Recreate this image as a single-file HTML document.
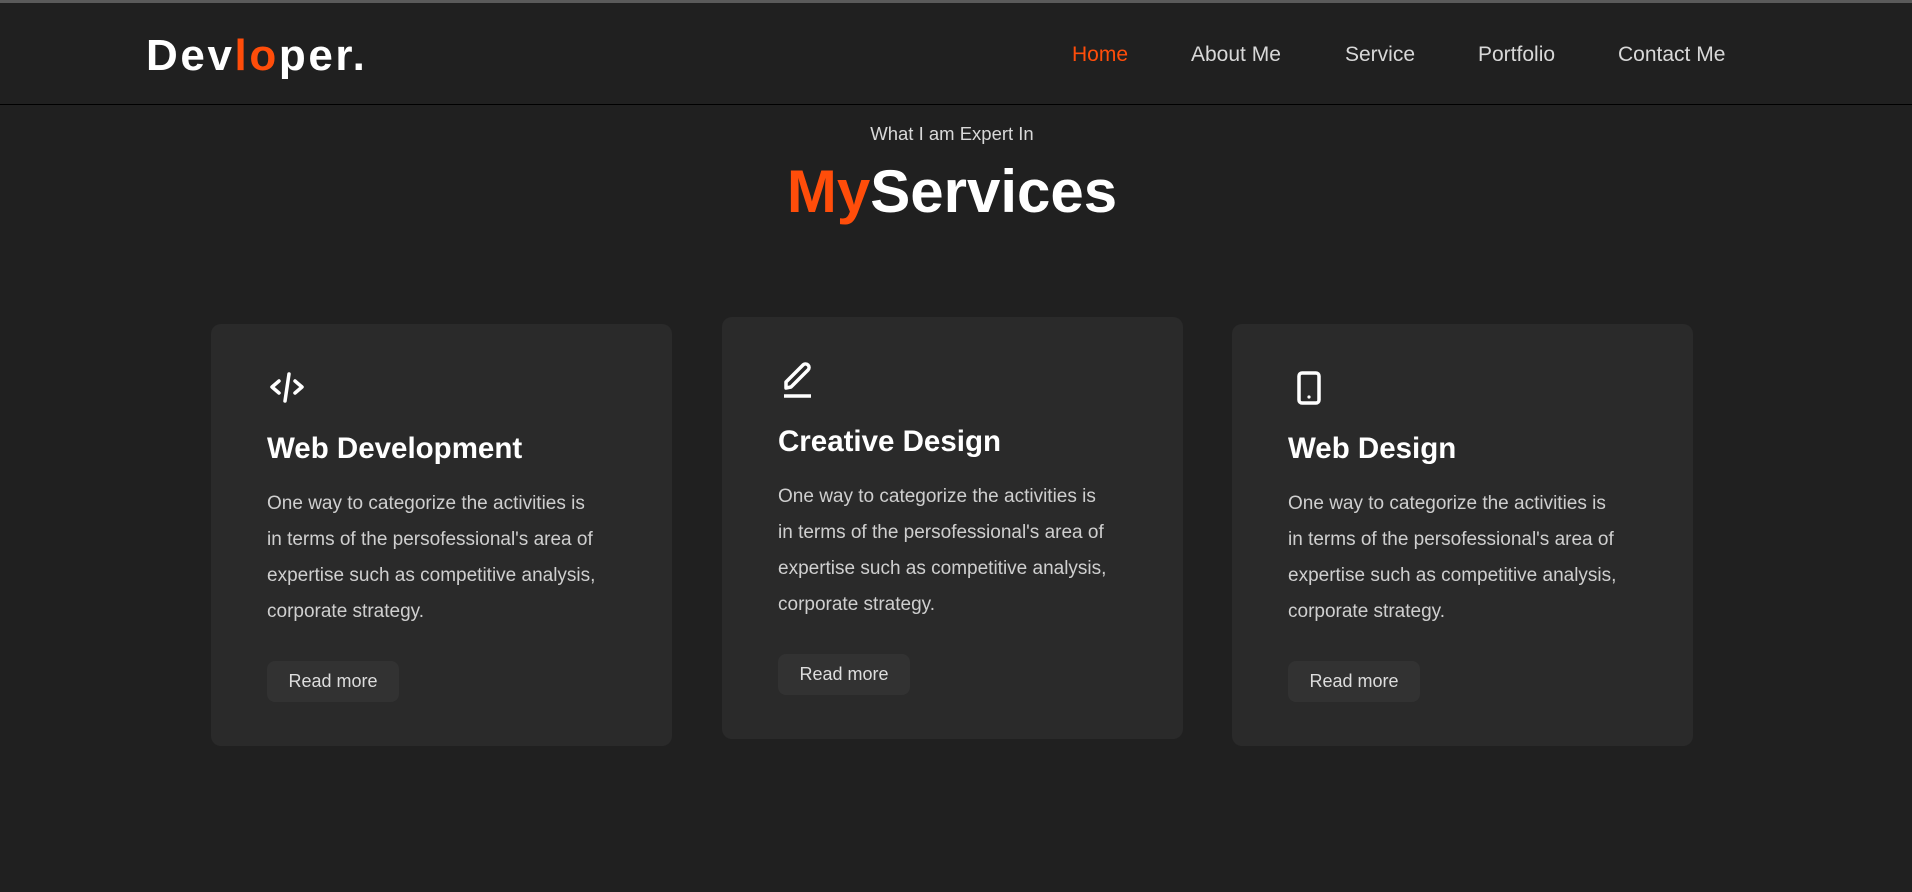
<!DOCTYPE html>
<html><head><meta charset="utf-8"><style>
*{margin:0;padding:0;box-sizing:border-box}
body{width:1912px;height:892px;background:#202020;font-family:"Liberation Sans",Arial,sans-serif;position:relative;overflow:hidden}
.topline{position:absolute;left:0;top:0;width:100%;height:3px;background:#5a5a5a}
.header{position:absolute;left:0;top:3px;width:100%;height:102px;border-bottom:1px solid #000}
.logo{position:absolute;left:146px;top:28px;font-size:44px;font-weight:bold;color:#fff;letter-spacing:2.6px}
.logo span{color:#ff4d0a}
.nav{position:absolute;top:40px;font-size:21px;color:#d8d8d8}
.sub{position:absolute;top:123px;left:0;width:1904px;text-align:center;font-size:18.5px;color:#d8d8d8}
.title{position:absolute;top:157px;left:0;width:1904px;text-align:center;font-size:60px;font-weight:bold;color:#fff}
.title span{color:#ff4d0a}
.card{position:absolute;width:461px;height:422px;background:#2a2a2a;border-radius:10px}
.card svg{position:absolute}
.card h3{position:absolute;left:56px;top:108px;font-size:29.5px;color:#fff;font-weight:bold}
.card p{position:absolute;left:56px;top:162px;width:337px;font-size:19px;line-height:36px;color:#cfcfcf}
.btn{position:absolute;left:56px;top:337px;width:132px;height:41px;background:#323232;border-radius:8px;color:#ddd;font-size:18px;text-align:center;line-height:41px}
</style></head><body>
<div class="topline"></div>
<div class="header">
<div class="logo">Dev<span>lo</span>per.</div>
<div class="nav" style="left:1072px;color:#ff4d0a">Home</div>
<div class="nav" style="left:1191px">About Me</div>
<div class="nav" style="left:1345px">Service</div>
<div class="nav" style="left:1478px">Portfolio</div>
<div class="nav" style="left:1618px">Contact Me</div>
</div>
<div class="sub">What I am Expert In</div>
<div class="title"><span>My</span>Services</div>

<div class="card" style="left:211px;top:324px">
<svg style="left:58px;top:47px" width="36" height="34" viewBox="0 0 36 34" fill="none" stroke="#fff" stroke-width="3.5" stroke-linecap="round" stroke-linejoin="round"><path d="M10 10 L3 16 L10 22"/><path d="M26 10 L33 16 L26 22"/><path d="M20 3 L16 30"/></svg>
<h3>Web Development</h3>
<p>One way to categorize the activities is in terms of the persofessional's area of expertise such as competitive analysis, corporate strategy.</p>
<div class="btn">Read more</div>
</div>

<div class="card" style="left:722px;top:317px">
<svg style="left:60px;top:43px" width="32" height="38" viewBox="0 0 32 38" fill="none" stroke="#fff" stroke-width="3.5" stroke-linejoin="round" stroke-linecap="round"><path d="M4 28 L4 22 L21 5 a3.5 3.5 0 0 1 5 5 L9 27 Z"/><path d="M2 36 L29 36" stroke-linecap="butt"/></svg>
<h3>Creative Design</h3>
<p>One way to categorize the activities is in terms of the persofessional's area of expertise such as competitive analysis, corporate strategy.</p>
<div class="btn">Read more</div>
</div>

<div class="card" style="left:1232px;top:324px">
<svg style="left:64px;top:47px" width="26" height="34" viewBox="0 0 26 34" fill="none" stroke="#fff" stroke-width="3.5"><rect x="3" y="2" width="20" height="30" rx="3"/><circle cx="13" cy="26" r="1.6" fill="#fff" stroke="none"/></svg>
<h3>Web Design</h3>
<p>One way to categorize the activities is in terms of the persofessional's area of expertise such as competitive analysis, corporate strategy.</p>
<div class="btn">Read more</div>
</div>
</body></html>
